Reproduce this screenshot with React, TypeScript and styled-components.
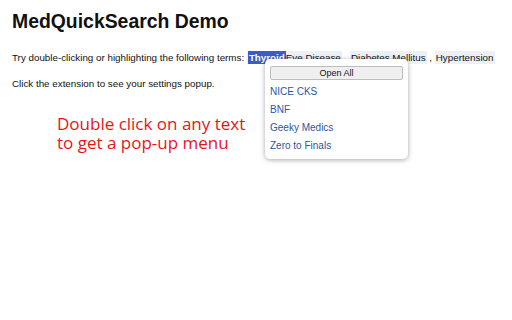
import styled, { createGlobalStyle } from "styled-components";

const GlobalStyle = createGlobalStyle`
    html, body {
        margin: 0;
        padding: 0;
        background: #ffffff;
    }
    body {
        font-family: "Liberation Sans", Arial, sans-serif;
        color: #111;
    }
`;

const terms = ["Thyroid Eye Disease", "Diabetes Mellitus", "Hypertension"];
const links = ["NICE CKS", "BNF", "Geeky Medics", "Zero to Finals"];

const App = () => {
    return (
        <>
            <GlobalStyle />
            <Page>
                <Title>MedQuickSearch Demo</Title>
                <Line>
                    Try double-clicking or highlighting the following terms:{" "}
                    {terms.map((term, index) => (
                        <span key={term}>
                            <Term>
                                {index === 0 ? (
                                    <>
                                        <Selected>Thyroid</Selected>Eye Disease
                                    </>
                                ) : (
                                    term
                                )}
                            </Term>
                            {index < terms.length - 1 && " , "}
                        </span>
                    ))}
                </Line>
                <Line>Click the extension to see your settings popup.</Line>
                <Hint>
                    Double click on any text
                    <br />
                    to get a pop-up menu
                </Hint>

                <Popup>
                    <OpenAll>Open All</OpenAll>
                    {links.map((link) => (
                        <MenuLink key={link}>{link}</MenuLink>
                    ))}
                </Popup>
            </Page>
        </>
    );
};

export default App;

// Styled Components
const Page = styled.div`
    position: relative;
    width: 512px;
    height: 320px;
    padding: 10px 12px;
    box-sizing: border-box;
`;

const Title = styled.h1`
    font-size: 19.4px;
    font-weight: bold;
    margin: 0 0 17px;
    line-height: 23px;
`;

const Line = styled.p`
    font-size: 9.8px;
    line-height: 16px;
    margin: 0 0 10px;
    white-space: nowrap;
`;

const Term = styled.span`
    background: #edf1f7;
    padding: 1px 1px;
`;

const Selected = styled.span`
    background: #3a5ec4;
    color: #ffffff;
    font-weight: bold;
    padding: 1px 1px;
`;

const Hint = styled.div`
    margin: 22px 0 0 45px;
    font-family: "Open Sans", sans-serif;
    font-size: 17px;
    line-height: 19px;
    color: #e8141b;
`;

const Popup = styled.div`
    position: absolute;
    left: 265px;
    top: 59px;
    width: 143px;
    box-sizing: border-box;
    padding: 7px 5px 4px;
    background: #ffffff;
    border-radius: 5px;
    box-shadow: 0 1px 5px rgba(0, 0, 0, 0.35);
    display: flex;
    flex-direction: column;
`;

const OpenAll = styled.button`
    height: 14px;
    padding: 0;
    margin-bottom: 3px;
    font-family: "Liberation Sans", Arial, sans-serif;
    font-size: 9px;
    color: #111;
    background: #efefef;
    border: 1px solid #bdbdbd;
    border-radius: 2px;
`;

const MenuLink = styled.a`
    font-size: 10px;
    line-height: 18px;
    color: #2d55a6;
    text-decoration: none;
`;
